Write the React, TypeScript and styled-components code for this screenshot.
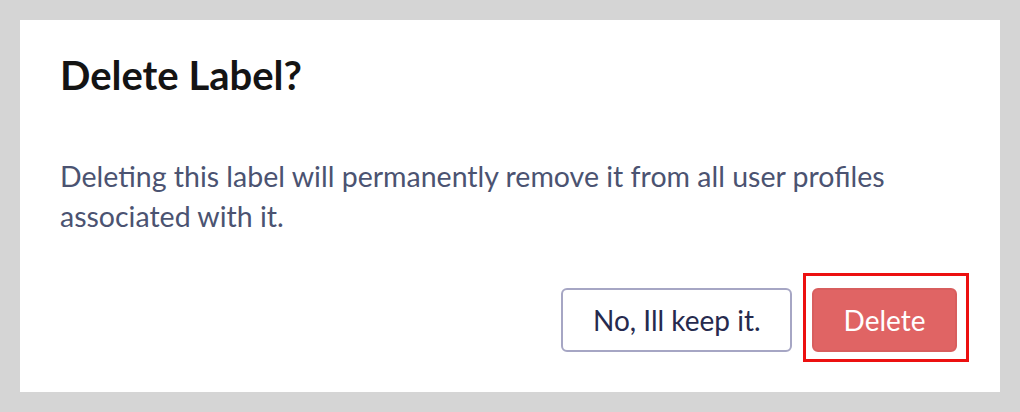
import React from "react";
import styled, { createGlobalStyle } from "styled-components";

const Global = createGlobalStyle`
  html, body {
    margin: 0;
    padding: 0;
    background: #d5d5d5;
  }
  body {
    font-family: Lato, "Noto Sans", sans-serif;
  }
`;

const Page = styled.div`
  width: 1020px;
  height: 412px;
  box-sizing: border-box;
  padding: 20px;
  background: #d5d5d5;
`;

const Card = styled.div`
  width: 980px;
  height: 372px;
  box-sizing: border-box;
  background: #ffffff;
  padding: 31px 43px 40px 40px;
  display: flex;
  flex-direction: column;
`;

const Title = styled.h2`
  margin: 0;
  font-family: Lato, sans-serif;
  font-weight: 700;
  font-size: 40px;
  line-height: 48px;
  color: #141414;
`;

const Body = styled.p`
  margin: 57px 0 0 0;
  font-family: Lato, sans-serif;
  font-weight: 400;
  font-size: 28.5px;
  line-height: 40px;
  color: #4b5371;
  max-width: 880px;
`;

const Actions = styled.div`
  margin-top: auto;
  display: flex;
  justify-content: flex-end;
  align-items: center;
  gap: 20px;
`;

const Button = styled.button<{ $variant: "ghost" | "danger" }>`
  box-sizing: border-box;
  height: 64px;
  padding: 0 29.5px;
  border-radius: 6px;
  font-family: Lato, sans-serif;
  font-size: 28px;
  font-weight: 400;
  cursor: pointer;
  border: 2px solid ${(p) => (p.$variant === "danger" ? "#d85e5e" : "#a6a6c4")};
  background: ${(p) => (p.$variant === "danger" ? "#e06464" : "#ffffff")};
  color: ${(p) => (p.$variant === "danger" ? "#ffffff" : "#262a4e")};
`;

const Highlight = styled.div`
  position: relative;
  display: flex;
`;

const HighlightBox = styled.div`
  position: absolute;
  top: -15px;
  left: -9px;
  right: -12px;
  bottom: -10px;
  border: 3px solid #ec1010;
  pointer-events: none;
`;

export default function App() {
  return (
    <>
      <Global />
      <Page>
        <Card>
          <Title>Delete Label?</Title>
          <Body>
            Deleting this label will permanently remove it from all user profiles
            associated with it.
          </Body>
          <Actions>
            <Button $variant="ghost">No, Ill keep it.</Button>
            <Highlight>
              <Button $variant="danger">Delete</Button>
              <HighlightBox />
            </Highlight>
          </Actions>
        </Card>
      </Page>
    </>
  );
}
